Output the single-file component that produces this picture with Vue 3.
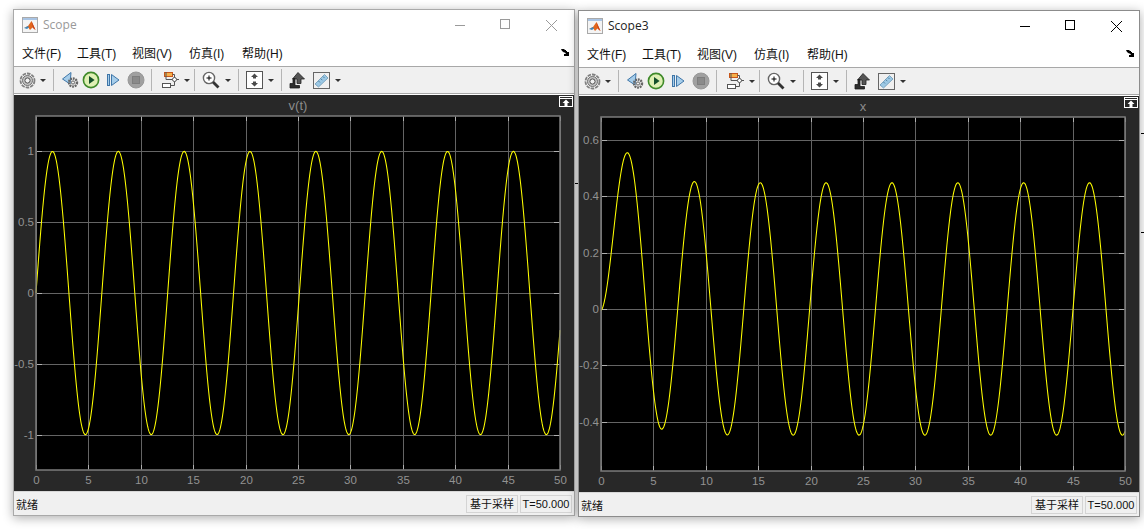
<script setup>
// plot box inside the dark panel, same for both scopes
const plot = { left: 22, right: 546, top: 21, bottom: 375 }

const xPos = (t) => plot.left + (t / 50) * (plot.right - plot.left)

function makeScope(name, active, title, yMin, yMax, yTicks, fn) {
  const yPos = (v) => plot.top + ((yMax - v) / (yMax - yMin)) * (plot.bottom - plot.top)
  const pts = []
  for (let t = 0; t <= 50; t += 0.05) {
    pts.push(xPos(t).toFixed(2) + ',' + yPos(fn(t)).toFixed(2))
  }
  return {
    name,
    active,
    title,
    points: pts.join(' '),
    yTicks: yTicks.map((v) => ({ label: String(v), y: Math.round(yPos(v)) + 0.5 })),
  }
}

const scopes = [
  makeScope('Scope', false, 'v(t)', -1.25, 1.25, [1, 0.5, 0, -0.5, -1], (t) => Math.sin(t)),
  makeScope('Scope3', true, 'x', -0.574, 0.68, [0.6, 0.4, 0.2, 0, -0.2, -0.4], (t) =>
    0.447 * Math.sin(t - 1.06) + 0.385 * Math.exp(-0.5 * t)
  ),
]

const xTicks = [0, 5, 10, 15, 20, 25, 30, 35, 40, 45, 50].map((t) => ({
  label: String(t),
  x: Math.round(xPos(t)) + 0.5,
}))

const menus = ['文件(F)', '工具(T)', '视图(V)', '仿真(I)', '帮助(H)']
</script>

<template>
  <div class="desktop">
    <div v-for="s in scopes" :key="s.name" class="window" :class="{ active: s.active }">
      <div class="titlebar">
        <svg class="logo" width="16" height="16" viewBox="0 0 16 16">
          <rect x="0.5" y="0.5" width="15" height="15" fill="#f4f4f4" stroke="#a9a9a9" />
          <rect x="1" y="1" width="14" height="2" fill="#a9c4e4" />
          <path d="M2 11 L6 9 L9.5 4 L13.5 13 L10.5 10.5 L8 13 L6 10 Z" fill="#e2661c" />
          <path d="M2 11 L6 9 L7 10.5 L5 12 Z" fill="#3f86b8" />
          <path d="M9.5 4 L13.5 13 L11 11 Z" fill="#c9401a" />
        </svg>
        <span class="wintitle">{{ s.name }}</span>
        <div class="controls">
          <svg width="46" height="29" viewBox="0 0 46 29"><path d="M19 15.5 H29" class="ctl" /></svg>
          <svg width="46" height="29" viewBox="0 0 46 29"><rect x="18.5" y="9.5" width="9" height="9" fill="none" class="ctl" /></svg>
          <svg width="46" height="29" viewBox="0 0 46 29"><path d="M18 10 L29 21 M29 10 L18 21" class="ctl" /></svg>
        </div>
      </div>

      <div class="menubar">
        <span v-for="m in menus" :key="m" class="menu">{{ m }}</span>
        <svg class="dock" width="8" height="7" viewBox="0 0 8 7">
          <path d="M0 0 H3 L4 1 H5 V2 H6 V3 H8 V7 H3 V5 H5 L4 3.5 H3 L1 2 Z" fill="#000" />
        </svg>
      </div>

      <div class="toolbar">
        <span class="btn first">
          <svg width="17" height="17" viewBox="0 0 17 17">
            <circle cx="8.5" cy="8.5" r="7" fill="none" stroke="#808080" stroke-width="1.8" stroke-dasharray="3.6 1" />
            <circle cx="8.5" cy="8.5" r="5" fill="#c4c4c4" stroke="#707070" />
            <circle cx="8.5" cy="8.5" r="2.6" fill="#f0f0f0" stroke="#505050" />
          </svg>
        </span>
        <span class="caret"></span>
        <span class="sep"></span>

        <span class="btn nudge">
          <svg width="18" height="18" viewBox="0 0 18 18">
            <path d="M10 1.5 L1.5 8 L9 13 Z" fill="#a6cdea" stroke="#3f76a8" />
            <circle cx="12" cy="11.5" r="4" fill="none" stroke="#666" stroke-width="2.4" stroke-dasharray="1.8 0.8" />
            <circle cx="12" cy="11.5" r="1.6" fill="#f0f0f0" stroke="#444" stroke-width="0.8" />
          </svg>
        </span>
        <span class="btn">
          <svg width="18" height="18" viewBox="0 0 18 18">
            <circle cx="9" cy="9" r="7.6" fill="#dff0b4" stroke="#3f8a2a" stroke-width="1.6" />
            <path d="M7 5 L12.6 9 L7 13 Z" fill="#14502a" />
          </svg>
        </span>
        <span class="btn">
          <svg width="16" height="16" viewBox="0 0 16 16">
            <rect x="2.5" y="2.5" width="2" height="11" fill="#a6cdea" stroke="#3f76a8" />
            <path d="M6.5 2.5 L14 8 L6.5 13.5 Z" fill="#a6cdea" stroke="#3f76a8" />
          </svg>
        </span>
        <span class="btn gap1">
          <svg width="18" height="18" viewBox="0 0 18 18">
            <circle cx="9" cy="9" r="8" fill="#a0a0a0" stroke="#989898" />
            <rect x="5.5" y="5.5" width="7" height="7" fill="#8a8a8a" stroke="#7e7e7e" />
          </svg>
        </span>
        <span class="sep wide"></span>

        <span class="btn">
          <svg width="18" height="18" viewBox="0 0 18 18">
            <rect x="3.5" y="1.5" width="8" height="4" fill="#f5b04a" stroke="#c8561a" />
            <rect x="1.5" y="12.5" width="8" height="4" fill="#fff" stroke="#555" />
            <circle cx="13.5" cy="8.5" r="2" fill="#fff" stroke="#555" />
            <path d="M11.5 3.5 H13.5 V6.5 M11.5 8.5 H5 V1 M13.5 10.5 V14.5 H9.5 M15.5 8.5 H18" fill="none" stroke="#555" />
          </svg>
        </span>
        <span class="caret"></span>
        <span class="sep tight"></span>

        <span class="btn">
          <svg width="18" height="18" viewBox="0 0 18 18">
            <circle cx="7" cy="7" r="5.6" fill="#fff" stroke="#666" stroke-width="1.4" />
            <path d="M4.5 7 H9.5 M7 4.5 V9.5" stroke="#000" />
            <path d="M11 11 L16.5 16.5" stroke="#333" stroke-width="2.8" />
          </svg>
        </span>
        <span class="caret"></span>
        <span class="sep"></span>

        <span class="btn">
          <svg width="17" height="18" viewBox="0 0 17 18">
            <rect x="0.5" y="0.5" width="16" height="17" fill="#fff" stroke="#555" />
            <path d="M8.5 2.5 L12 6 H10 V7.5 H7 V6 H5 Z M8.5 15.5 L12 12 H10 V10.5 H7 V12 H5 Z" fill="#4a4a4a" />
          </svg>
        </span>
        <span class="caret"></span>
        <span class="sep"></span>

        <span class="btn">
          <svg width="16" height="17" viewBox="0 0 16 17">
            <path d="M9 0.5 L15.5 7 H12 V11.5 H8 V7 H3.5 Z" fill="#555" stroke="#222" stroke-width="0.8" />
            <path d="M6 6.5 H4 V11.5 H1 V16 H10.5 V13.5 H6 Z" fill="#2e2e2e" stroke="#1c1c1c" stroke-width="0.8" />
          </svg>
        </span>
        <span class="btn gap2">
          <svg width="17" height="17" viewBox="0 0 17 17">
            <rect x="0.5" y="0.5" width="16" height="16" fill="#f0f0f0" stroke="#666" />
            <path d="M2 12 L11.5 2.5 L15 6 L5.5 15 Z" fill="#9cc8e4" stroke="#5d8eae" stroke-width="0.7" />
            <path d="M5.5 9 L7 10.5 M7.8 6.7 L9.3 8.2 M10 4.5 L11.5 6" stroke="#3d6f92" stroke-width="0.8" />
          </svg>
        </span>
        <span class="caret"></span>
      </div>

      <div class="panel">
        <svg class="axes" width="560" height="396" viewBox="0 0 560 396">
          <text class="axtitle" x="284" y="15">{{ s.title }}</text>

          <rect x="22" y="21" width="524" height="354" fill="#000" />
          <g class="grid">
            <path v-for="t in xTicks" :key="t.label" :d="`M${t.x} 21 V375`" />
            <path v-for="t in s.yTicks" :key="t.label" :d="`M22 ${t.y} H546`" />
          </g>
          <g class="ticks">
            <path v-for="t in xTicks" :key="t.label" :d="`M${t.x} 22 v4 M${t.x} 374 v-4`" />
            <path v-for="t in s.yTicks" :key="t.label" :d="`M23 ${t.y} h5 M545 ${t.y} h-5`" />
          </g>
          <polyline :points="s.points" fill="none" stroke="#ffff00" stroke-width="1.05" />
          <rect x="22" y="21" width="524" height="354" fill="none" class="frame" />

          <text v-for="t in xTicks" :key="t.label" class="lab" :x="t.x" y="389" text-anchor="middle">{{ t.label }}</text>
          <text v-for="t in s.yTicks" :key="t.label" class="lab" x="20" :y="t.y + 3" text-anchor="end">{{ t.label }}</text>
        </svg>

        <svg class="undock" width="14" height="11" viewBox="0 0 14 11">
          <rect x="0.5" y="0.5" width="13" height="10" fill="none" stroke="#fff" />
          <path d="M1 2.5 H13" stroke="#fff" />
          <path d="M7 3.5 L10.5 7 H8.5 V10 H5.5 V7 H3.5 Z" fill="#fff" />
        </svg>
      </div>

      <div class="statusbar">
        <span class="ready">就绪</span>
        <span class="cell">基于采样</span>
        <span class="cell">T=50.000</span>
      </div>
    </div>

    <i class="mark mark-a"></i>
    <i class="mark mark-b"></i>
    <i class="mark mark-c"></i>
  </div>
</template>

<style scoped>
.desktop {
  position: relative;
  width: 1144px;
  height: 529px;
  overflow: hidden;
  background: #fff;
  display: flex;
  gap: 3px;
  padding: 9px 0 0 13px;
  box-sizing: border-box;
  font-family: "Open Sans", "Noto Sans CJK SC", sans-serif;
}
.window {
  width: 562px;
  height: 507px;
  box-sizing: border-box;
  border: 1px solid #a9a9a9;
  background: #fff;
  display: flex;
  flex-direction: column;
  flex-shrink: 0;
  box-shadow: 0 2px 10px rgba(0, 0, 0, 0.32);
}
.window.active {
  margin-top: 1px;
  border-color: #8c8c8c;
}
.titlebar {
  height: 28px;
  display: flex;
  align-items: center;
  padding-left: 8px;
}
.logo {
  flex-shrink: 0;
  margin-top: 1px;
}
.wintitle {
  margin-left: 5px;
  font-size: 12px;
  color: #999;
}
.active .wintitle {
  color: #222;
}
.controls {
  margin-left: auto;
  display: flex;
  height: 28px;
}
.ctl {
  stroke: #9a9a9a;
  stroke-width: 1;
}
.active .ctl {
  stroke: #000;
}
.menubar {
  height: 28px;
  display: flex;
  align-items: center;
  padding-left: 8px;
  border-bottom: 1px solid #a8a8a8;
}
.menu {
  width: 55px;
  font-size: 12px;
  color: #111;
  white-space: nowrap;
  font-family: "Liberation Sans", "Noto Sans CJK SC", sans-serif;
}
.menu:nth-child(3) {
  width: 57px;
}
.menu:nth-child(4) {
  width: 53px;
}
.dock {
  margin-left: auto;
  margin-right: 5px;
}
.toolbar {
  height: 26px;
  background: #f0f0f0;
  border-bottom: 1px solid #a8a8a8;
  display: flex;
  align-items: center;
  padding-left: 1px;
}
.btn {
  width: 22px;
  height: 22px;
  display: flex;
  align-items: center;
  justify-content: center;
}
.first {
  margin-left: 1px;
  margin-right: -1px;
}
.nudge {
  margin-left: 1px;
  margin-right: -1px;
}
.gap1 {
  margin-left: 1px;
}
.gap2 {
  margin-left: 2px;
}
.caret {
  width: 12px;
  display: flex;
  justify-content: center;
}
.caret::before {
  content: "";
  border-left: 3px solid transparent;
  border-right: 3px solid transparent;
  border-top: 3px solid #333;
  margin-top: 1px;
}
.sep {
  width: 1px;
  height: 22px;
  background: #b5b5b5;
  margin: 0 4px;
}
.sep.wide {
  margin: 0 7px 0 4px;
}
.sep.tight {
  margin: 0 5px 0 1px;
}
.panel {
  height: 396px;
  margin-top: 1px;
  background: #282828;
  position: relative;
}
.axes {
  display: block;
}
.undock {
  position: absolute;
  top: 1px;
  right: 1px;
}
.axtitle {
  font-family: "Liberation Sans", sans-serif;
  font-size: 13px;
  fill: #8c8c8c;
  text-anchor: middle;
}
.grid path {
  stroke: #646464;
  stroke-width: 1;
}
.ticks path {
  stroke: #b0b0b0;
  stroke-width: 1;
}
.frame {
  stroke: #7c7c7c;
  stroke-width: 1.5;
}
.lab {
  font-family: "Liberation Sans", sans-serif;
  font-size: 11.5px;
  fill: #929292;
}
.statusbar {
  flex: 1;
  border-top: 1px solid #d8d8d8;
  background: #f0f0f0;
  display: flex;
  align-items: center;
  padding: 0 2px;
  gap: 2px;
  font-size: 11px;
  color: #111;
  font-family: "Liberation Sans", "Noto Sans CJK SC", sans-serif;
}
.ready {
  margin-right: auto;
}
.cell {
  width: 52px;
  height: 18px;
  line-height: 16px;
  box-sizing: border-box;
  border: 1px solid #d4d4d4;
  text-align: center;
  white-space: nowrap;
}
.mark {
  position: absolute;
  background: #000;
  height: 1px;
}
.mark-a {
  left: 575px;
  top: 183px;
  width: 3px;
}
.mark-b {
  left: 1141px;
  top: 133px;
  width: 3px;
}
.mark-c {
  left: 1141px;
  top: 232px;
  width: 3px;
}
</style>
